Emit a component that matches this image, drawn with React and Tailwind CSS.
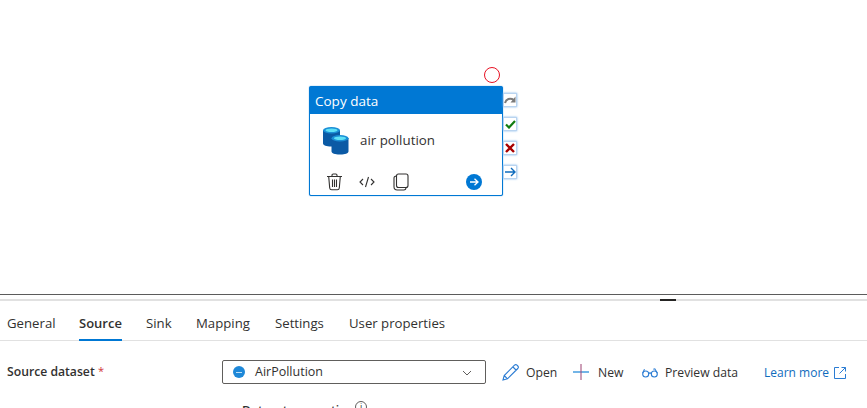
const tabs = [
  { label: "General", width: "w-[48px]" },
  { label: "Source", width: "w-[43px]" },
  { label: "Sink", width: "w-[26px]" },
  { label: "Mapping", width: "w-[55px]" },
  { label: "Settings", width: "w-[50px]" },
  { label: "User properties", width: "w-[95px]" },
];

const PortBox = ({ children }) => (
  <div className="w-[14px] h-[14px] bg-white border border-[#b9d4f0] shadow-[0_0_2px_#7db4ea] flex items-center justify-center">
    {children}
  </div>
);

const Cylinder = ({ x, y }) => (
  <g transform={`translate(${x} ${y})`}>
    <path d="M0 3v13.5c0 1.7 3.6 3 8 3h1c4.400 0 8-1.300 8-3V3z" fill="#0b5aa5" />
    <ellipse cx="8.500" cy="3.200" rx="8.500" ry="3.200" fill="#1b8fd6" />
    <ellipse cx="8.500" cy="3.300" rx="6" ry="1.800" fill="#5fe0f5" />
  </g>
);

export default function App() {
  return (
    <div className="w-[867px] h-[408px] overflow-hidden bg-white font-['Open_Sans',sans-serif] text-[#323130]">
      {/* canvas */}
      <div className="relative h-[294px]">
        <div className="absolute left-[484px] top-[67px] w-4 h-4 rounded-full border border-[#e81123]" />

        <div className="absolute left-[309px] top-[86px] w-[194px] h-[110px] rounded-[2px] border border-[#0078d4] bg-white flex flex-col shadow-[0_0_1px_#0078d4]">
          <div className="h-[27px] bg-[#0078d4] text-white text-[13.5px] leading-[29px] pl-[5px] shrink-0">Copy data</div>
          <div className="flex items-center h-[54px] pl-[13px] shrink-0">
            <svg width="26" height="28" viewBox="0 0 26 28">
              <Cylinder x="0" y="0" />
              <Cylinder x="8.500" y="8" />
            </svg>
            <span className="ml-[11px] -mt-px text-[13.300px] text-[#323130]">air pollution</span>
          </div>
          <div className="flex items-center pl-[16px] pr-[20px] h-[26px] pt-[2px]">
            <svg width="17" height="18" viewBox="0 0 17 18" fill="none" stroke="#323130" strokeWidth="1.100">
              <path d="M1 3.500h15M6 3.500V2.200C6 1.500 6.500 1 7.200 1h2.600c.7 0 1.200.5 1.200 1.200v1.300M2.700 3.500l1 11.500c.1 1 .9 1.800 2 1.800h5.600c1.100 0 1.900-.8 2-1.800l1-11.500M6.500 6.500v7.500M8.500 6.500v7.500M10.500 6.500v7.500" />
            </svg>
            <svg className="ml-[16px]" width="16" height="12" viewBox="0 0 16 12" fill="none" stroke="#323130" strokeWidth="1.100">
              <path d="M4 3 1 6l3 3M12 3l3 3-3 3M9.500 1l-3 10" />
            </svg>
            <svg className="ml-[18px]" width="16" height="18" viewBox="0 0 16 18" fill="none" stroke="#323130" strokeWidth="1.100">
              <rect x="3.500" y="1" width="11.500" height="13.500" rx="2" />
              <path d="M3.500 3C1.800 3 1 4 1 5.200v8.600C1 15.700 2.300 17 4.200 17h6.600c1.300 0 2.200-.8 2.200-2.500" />
            </svg>
            <div className="ml-auto w-4 h-4 rounded-full bg-[#0078d4] flex items-center justify-center">
              <svg width="10" height="10" viewBox="0 0 10 10" fill="none" stroke="#fff" strokeWidth="1.300">
                <path d="M1 5h8M5.500 1.800 9 5 5.500 8.200" />
              </svg>
            </div>
          </div>
        </div>

        {/* ports */}
        <div className="absolute left-[503px] top-[93px] flex flex-col gap-[10px]">
          <PortBox>
            <svg width="12" height="10" viewBox="0 0 12 10" fill="none" stroke="#7a7a7a" strokeWidth="2">
              <path d="M1 8c1-4 5-5.500 9-3" />
              <path d="M11.500 1.500v6h-5z" fill="#7a7a7a" stroke="none" />
            </svg>
          </PortBox>
          <PortBox>
            <svg width="11" height="9" viewBox="0 0 11 9" fill="none" stroke="#107c10" strokeWidth="2.200">
              <path d="M1 4.500 4 7.500 10 1" />
            </svg>
          </PortBox>
          <PortBox>
            <svg width="10" height="10" viewBox="0 0 10 10" fill="none" stroke="#a80000" strokeWidth="2.400">
              <path d="m1 1 8 8M9 1 1 9" />
            </svg>
          </PortBox>
          <PortBox>
            <svg width="11" height="10" viewBox="0 0 11 10" fill="none" stroke="#0f6cbd" strokeWidth="1.400">
              <path d="M0 5h10M6 1l4 4-4 4" />
            </svg>
          </PortBox>
        </div>
      </div>

      <div className="h-px bg-[#5c5c5c]" />

      {/* splitter */}
      <div className="mt-[4px] h-[2px] bg-[#e1e1e1] flex justify-end pr-[191px]">
        <div className="w-4 h-[2px] bg-[#252423]" />
      </div>

      {/* tabs */}
      <div className="flex h-[40px] border-b border-[#e1e1e1] pl-[7px] gap-[24px] text-[13.200px] whitespace-nowrap">
        {tabs.map((t) => (
          <div
            key={t.label}
            className={
              t.label === "Source"
                ? `${t.width} h-[39.500px] pt-[13px] text-[13px] font-semibold border-b-2 border-[#0078d4] text-[#323130]`
                : `${t.width} pt-[13px] text-[#323130]`
            }
          >
            {t.label}
          </div>
        ))}
      </div>

      {/* source row */}
      <div className="flex items-center mt-[19px] h-[24px] pl-[7px] text-[12.200px]">
        <div className="w-[215px] font-semibold text-[#323130]">
          Source dataset <span className="text-[#d13438] font-normal align-top text-[11px]">*</span>
        </div>
        <div className="w-[264px] h-[24px] border border-[#605e5c] rounded-[2px] flex items-center pl-[10px] pr-[13px]">
          <span className="w-[12px] h-[12px] rounded-full bg-[#1e88d8] flex items-center justify-center">
            <span className="w-[6px] h-px bg-[#bfe0f7]" />
          </span>
          <span className="ml-[10px] mt-px text-[12.500px]">AirPollution</span>
          <svg className="ml-auto mt-px" width="10" height="6" viewBox="0 0 10 6" fill="none" stroke="#605e5c">
            <path d="m1 1 4 4 4-4" />
          </svg>
        </div>

        <svg className="ml-[16px]" width="17" height="17" viewBox="0 0 17 17" fill="none" stroke="#2b7cd3" strokeWidth="1.100">
          <path d="M1 16l1.200-4.500L12.500 1.200c.8-.7 1.800-.7 2.500 0l.8.8c.7.700.7 1.700 0 2.500L5.500 14.800zM2.200 11.500l3.300 3.300M11 3l3 3" />
        </svg>
        <span className="ml-[7px] w-[32px] mt-[2px]">Open</span>

        <svg className="ml-[15px]" width="16" height="16" viewBox="0 0 16 16" fill="none" strokeWidth="1.100">
          <path d="M0 8h16" stroke="#0078d4" />
          <path d="M8 0v16" stroke="#a4507c" />
        </svg>
        <span className="ml-[9px] w-[26px] mt-[2px]">New</span>

        <svg className="ml-[18px] mt-[2px]" width="16" height="10" viewBox="0 0 16 10" fill="none" stroke="#2b7cd3" strokeWidth="1.100">
          <circle cx="3.700" cy="6" r="3" />
          <circle cx="12.300" cy="6" r="3" />
          <path d="M6.700 5.500c.8-.7 1.800-.7 2.600 0M.7 5 2.500 1.200M15.300 5 12.800.8l-1.500.4" />
        </svg>
        <span className="ml-[7px] w-[73px] mt-[2px] whitespace-nowrap">Preview data</span>

        <span className="ml-[26px] w-[65px] mt-[2px] text-[12px] text-[#0f6cbd] whitespace-nowrap">Learn more</span>
        <svg className="ml-[5px] mt-[2px]" width="12" height="12" viewBox="0 0 12 12" fill="none" stroke="#2b7cd3">
          <path d="M5 .5H.5v11h11V7M7.500.5h4v4M11.500.5 5.500 6.500" />
        </svg>
      </div>

      {/* next row, clipped by the window */}
      <div className="flex items-center mt-[18px] pl-[242px] text-[12.200px] font-semibold">
        <span>Dataset properties</span>
        <span className="ml-[3px] -mt-[8px] w-[12px] h-[12px] rounded-full border border-[#605e5c] text-[9px] leading-[10px] text-center font-normal">i</span>
      </div>
    </div>
  );
}
